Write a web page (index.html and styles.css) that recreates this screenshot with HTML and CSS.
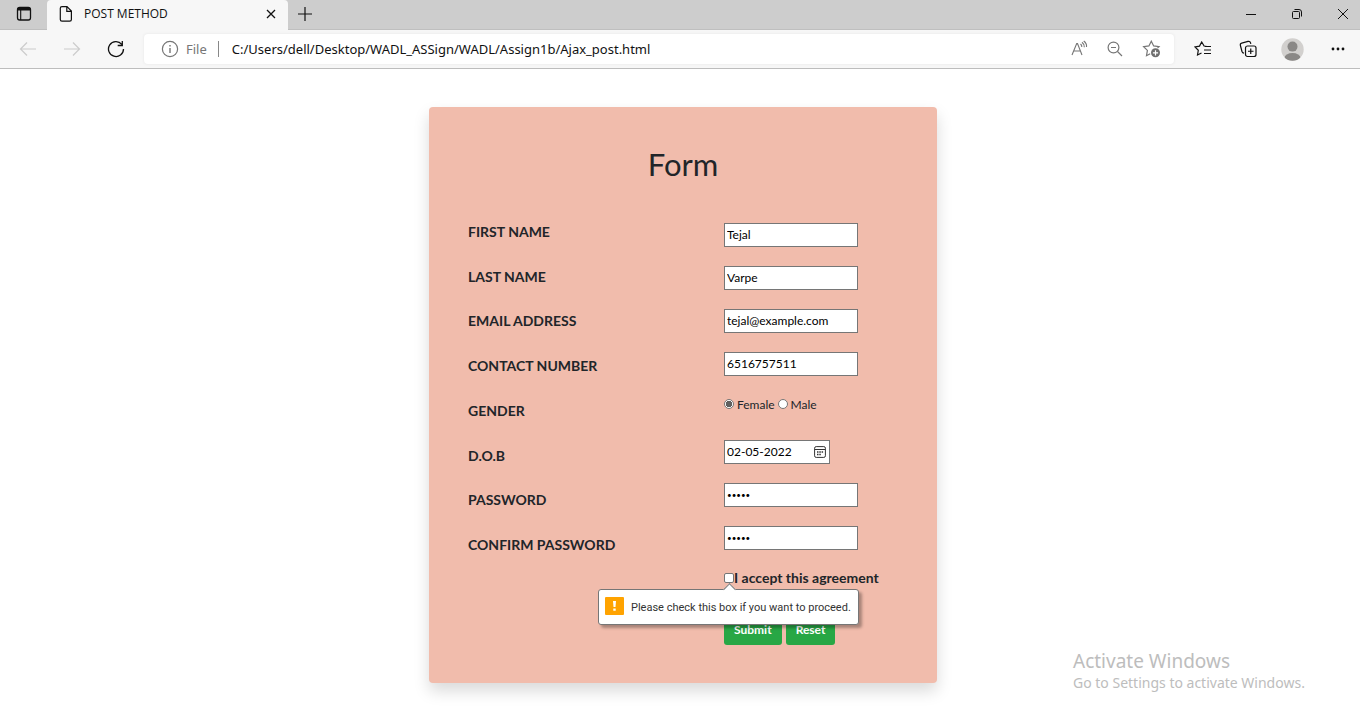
FILE: index.html
```html
<!DOCTYPE html>
<html lang="en">
<head>
<meta charset="utf-8">
<meta name="viewport" content="width=device-width, initial-scale=1">
<title>POST METHOD</title>
<link rel="stylesheet" href="styles.css">
</head>
<body>
<header class="browser">
  <div class="tabstrip">
    <button class="tab-actions" aria-label="Tab actions">
      <svg width="16" height="16" viewBox="0 0 16 16" fill="none" stroke="#111"><rect x="1.5" y="1.5" width="13" height="12.5" rx="2.2" stroke-width="1.3"/><path d="M2 3.2h12" stroke-width="2.6"/><path d="M4.700 4v10" stroke-width="1.1"/></svg>
    </button>
    <div class="tab">
      <svg width="14" height="18" viewBox="0 0 14 18" fill="none" stroke="#111" stroke-width="1.2"><path d="M3 1.6h5l4.400 4.400v8.500a1.700 1.700 0 0 1-1.700 1.700H3a1.700 1.700 0 0 1-1.700-1.700V3.300A1.700 1.700 0 0 1 3 1.600zM7.800 1.800v4.500h4.500"/></svg>
      <span class="tab-title">POST METHOD</span>
      <button class="tab-close" aria-label="Close tab"><svg width="10" height="10" viewBox="0 0 10 10" stroke="#111" stroke-width="1.3"><path d="M1 1l8 8M9 1L1 9"/></svg></button>
    </div>
    <button class="tab-new" aria-label="New tab"><svg width="16" height="16" viewBox="0 0 16 16" stroke="#111" stroke-width="1.200"><path d="M8 1v14M1 8h14"/></svg></button>
    <div class="window-controls">
      <button aria-label="Minimize"><svg width="12" height="12" viewBox="0 0 12 12" stroke="#111"><path d="M1 6.500h10"/></svg></button>
      <button aria-label="Restore"><svg width="12" height="12" viewBox="0 0 12 12" fill="none" stroke="#111"><rect x="1.500" y="3.500" width="7" height="7" rx="1"/><path d="M3.500 1.500H8a2.500 2.500 0 0 1 2.500 2.500v4.500"/></svg></button>
      <button aria-label="Close"><svg width="12" height="12" viewBox="0 0 12 12" stroke="#111"><path d="M1 1l10 10M11 1L1 11"/></svg></button>
    </div>
  </div>
  <div class="toolbar">
    <nav class="history" aria-label="History">
      <button aria-label="Back"><svg width="18" height="16" viewBox="0 0 18 16" fill="none" stroke="#ccc" stroke-width="1.200"><path d="M17 8H1.500M8 1.500L1.500 8 8 14.500"/></svg></button>
      <button aria-label="Forward"><svg width="18" height="16" viewBox="0 0 18 16" fill="none" stroke="#ccc" stroke-width="1.200"><path d="M1 8h15.500M10 1.500L16.500 8 10 14.500"/></svg></button>
      <button aria-label="Refresh"><svg width="18" height="18" viewBox="0 0 18 18" fill="none" stroke="#111" stroke-width="1.300"><path d="M16.500 9A7.500 7.500 0 1 1 14.800 4.300M15.300 1v4.500h-4.600"/></svg></button>
    </nav>
    <div class="address">
      <svg width="18" height="18" viewBox="0 0 18 18" fill="none" stroke="#767676" stroke-width="1.200"><circle cx="9" cy="9" r="7.600"/><path d="M9 8v5M9 5v1.500" stroke-width="1.400"/></svg>
      <label class="scheme" for="url">File</label>
      <input class="url" id="url" type="text" value="C:/Users/dell/Desktop/WADL_ASSign/WADL/Assign1b/Ajax_post.html">
      <div class="address-tools">
        <button aria-label="Read aloud"><svg width="18" height="18" viewBox="0 0 18 18" fill="none" stroke="#767676" stroke-width="1.100"><path d="M2 15L6.700 3.500h.8L12 15M3.700 11h6.700M10.500 4q1.500 1.300 1.300 3M12 2.300q2.600 2 2.300 5M13.700 1q3.300 2.300 2.800 6"/></svg></button>
        <button aria-label="Zoom out"><svg width="16" height="16" viewBox="0 0 16 16" fill="none" stroke="#767676" stroke-width="1.200"><circle cx="6.500" cy="6.500" r="5.400"/><path d="M10.500 10.500l4.500 4.500M4 6.500h5"/></svg></button>
        <button aria-label="Add to favorites"><svg width="19" height="18" viewBox="0 0 19 18" fill="none" stroke="#767676" stroke-width="1.200"><path d="M15.500 8L17 6.700l-5.300-.8L9.300 1.200 6.900 5.900l-5.300.8 3.800 3.700-.9 5.300 3.700-2"/><circle cx="13.500" cy="12.800" r="4.500" fill="#6e6e6e" stroke="none"/><path d="M13.500 10.200v5.200M10.900 12.800h5.200" stroke="#fff"/></svg></button>
      </div>
    </div>
    <div class="actions">
      <button aria-label="Favorites"><svg width="18" height="16" viewBox="0 0 18 16" fill="none" stroke="#111" stroke-width="1.200"><path d="M13 5.500l-2.900-.5L7.700 1 5.500 5.100l-4.500.8 3.300 3.400-.8 4.700L7.500 12M11 5.500h6M10 9h7M10 12.500h7"/></svg></button>
      <button aria-label="Collections"><svg width="18" height="18" viewBox="0 0 18 18" fill="none" stroke="#111" stroke-width="1.200"><rect x="6.500" y="6" width="10.500" height="10.500" rx="2"/><path d="M11.750 8.500V14M9 11.250h5.500M5 13.200C3.800 13 3.300 12.400 3 11.500L1.400 5.500C1.100 4.300 1.600 3.400 2.700 3.100L9 1.400c1.200-.3 2.200.3 2.500 1.300l.3 1.200"/></svg></button>
      <button aria-label="Profile"><svg width="23" height="23" viewBox="0 0 23 23"><defs><clipPath id="avatar"><circle cx="11.500" cy="11.500" r="11.200"/></clipPath></defs><g clip-path="url(#avatar)"><rect width="23" height="23" fill="#d2d0ce"/><circle cx="11.500" cy="8.600" r="5" fill="#8a8886"/><ellipse cx="11.500" cy="20" rx="8" ry="5" fill="#8a8886"/></g></svg></button>
      <button aria-label="Settings and more"><svg width="14" height="4" viewBox="0 0 14 4" fill="#111"><circle cx="2" cy="2" r="1.400"/><circle cx="7" cy="2" r="1.400"/><circle cx="12" cy="2" r="1.400"/></svg></button>
    </div>
  </div>
</header>
<main class="page">
  <form class="card">
    <h1 class="card-title">Form</h1>
    <div class="columns">
      <div class="labels">
        <label for="first">FIRST NAME</label>
        <label for="last">LAST NAME</label>
        <label for="email">EMAIL ADDRESS</label>
        <label for="phone">CONTACT NUMBER</label>
        <span id="gender-label">GENDER</span>
        <label for="dob">D.O.B</label>
        <label for="password">PASSWORD</label>
        <label for="confirm">CONFIRM PASSWORD</label>
      </div>
      <div class="fields">
        <input class="field" id="first" type="text" value="Tejal">
        <input class="field" id="last" type="text" value="Varpe">
        <input class="field" id="email" type="email" value="tejal@example.com">
        <input class="field" id="phone" type="tel" value="6516757511">
        <div class="genders" role="radiogroup" aria-labelledby="gender-label">
          <input class="radio" type="radio" name="gender" id="female" checked><label for="female">Female</label>
          <input class="radio" type="radio" name="gender" id="male"><label for="male">Male</label>
        </div>
        <div class="date">
          <input class="date-text" id="dob" type="text" value="02-05-2022">
          <button class="date-open" type="button" aria-label="Open calendar"><svg width="12" height="12" viewBox="0 0 12 12" fill="none" stroke="#333"><rect x=".6" y=".6" width="10.800" height="10.800" rx="1.600"/><path d="M1 3.500h10"/><path d="M3 6h6.500M3 8.500h4" stroke-dasharray="1.500 .8" stroke-width="1.300"/></svg></button>
        </div>
        <input class="field secret" id="password" type="password" value="tejal">
        <input class="field secret" id="confirm" type="password" value="tejal">
        <div class="agreement">
          <input class="check" type="checkbox" id="agree" aria-describedby="hint"><label for="agree">I accept this agreement</label>
          <div class="hint" id="hint" role="alert">
            <svg width="19" height="18" viewBox="0 0 19 18"><rect width="19" height="18" rx="1" fill="#ffa300"/><path d="M8 4h3l-.5 6h-2zM8.300 11.500h2.400v2.300H8.300z" fill="#fff"/></svg>
            <span class="hint-text">Please check this box if you want to proceed.</span>
          </div>
        </div>
        <div class="buttons">
          <button class="btn" type="submit">Submit</button>
          <button class="btn" type="reset">Reset</button>
        </div>
      </div>
    </div>
  </form>
  <aside class="watermark">
    <p class="watermark-title">Activate Windows</p>
    <p class="watermark-text">Go to Settings to activate Windows.</p>
  </aside>
</main>
</body>
</html>
```
FILE: styles.css
```css
* { box-sizing: border-box; }
body { margin: 0; min-height: 100vh; display: flex; flex-direction: column; background: #fff; color: #212529; font: 14px/18px Lato, sans-serif; }
button { margin: 0; padding: 0; border: 0; background: none; font: inherit; color: inherit; }
svg { display: block; flex: none; }

.browser { font: 13px/18px "Noto Sans", sans-serif; color: #111; background: #f7f7f7; border-bottom: 1px solid #bdbdbd; }
.browser button { display: grid; place-items: center; }
.tabstrip { display: flex; height: 30px; background: #cdcdcd; box-shadow: inset 0 -1px #bfbfbf; }
.tab-actions { width: 47px; padding-bottom: 2px; }
.tab { width: 241px; display: flex; align-items: center; padding: 0 12px 2px 12px; background: #f7f7f7; border-radius: 4px 4px 0 0; }
.tab-title { flex: 1; margin-left: 11px; font: 12px/18px "Open Sans", sans-serif; }
.tab-new { width: 34px; padding-bottom: 2px; }
.window-controls { display: flex; margin-left: auto; }
.window-controls button { width: 46px; padding-bottom: 2px; }
.window-controls button:last-child { width: 40px; padding-left: 6px; }

.toolbar { display: flex; align-items: center; height: 38px; }
.history { display: flex; padding-left: 6px; }
.history button { width: 44px; }
.address { flex: 1; display: flex; align-items: center; height: 30px; margin-left: 6px; padding: 0 13px 0 17px; background: #fff; border-radius: 4px; box-shadow: 0 0 3px #e4e4e4; }
.scheme { margin-left: 7px; padding-right: 11px; border-right: 1px solid #888; color: #767676; line-height: 16px; }
.url { flex: 1; min-width: 0; padding: 0 13px; border: 0; outline: 0; background: none; font: inherit; color: #111; }
.address-tools { display: flex; gap: 19px; }
.actions { display: flex; margin-left: 6px; }
.actions button { width: 45px; }

.page { flex: 1; position: relative; padding: 38px 16px 32px 22px; }
.card { max-width: 508px; margin: 0 auto; padding: 38px; background: #f1bcac; border-radius: 4px; box-shadow: 0 8px 16px rgba(0, 0, 0, .15); }
.card-title { margin: 0 0 40px; font-size: 31px; line-height: 38px; font-weight: 400; text-align: center; }
.columns { display: grid; grid-template-columns: 256px 1fr; }
.labels { display: flex; flex-direction: column; justify-content: space-between; padding: 0 0 91px 1px; font-weight: 700; }
.fields { display: flex; flex-direction: column; align-items: flex-start; gap: 19px; padding-left: 1px; }
.field, .date { height: 24px; border: 1px solid #767676; background: #fff; }
.field { width: 134px; padding: 0 2px 1px; font: 12px/20px Lato, sans-serif; color: #000; border-radius: 0; }
.secret { font-size: 8px; }
.genders { display: flex; height: 26px; font-size: 12px; line-height: 20px; }
.genders label { margin: 0 3px; }
.radio, .check { width: 10px; height: 10px; flex: none; margin: 0; appearance: none; border: 1px solid #767676; background: #fff; }
.radio { margin-top: 4px; border-radius: 50%; }
.radio:checked { background: radial-gradient(circle, #606060 0 3px, #fff 3px); }
.check { border-radius: 2px; }
.date { display: flex; align-items: center; width: 106px; padding: 0 3px 0 2px; }
.date-text { flex: 1; min-width: 0; padding: 0; border: 0; outline: 0; font: 12px/20px Lato, sans-serif; color: #000; }
.agreement { position: relative; display: flex; align-items: center; height: 18px; font-weight: 700; }
.buttons { display: flex; gap: 4px; margin-top: 9px; }
.btn { height: 30px; padding: 0 10px; border-radius: 3px; background: #28a745; color: #fff; font-size: 12px; font-weight: 700; }

.hint { position: absolute; top: 20px; left: -126px; display: flex; align-items: center; gap: 7px; height: 36px; padding: 0 7px 2px 6px; background: #fff; border: 1px solid #767676; border-radius: 3px; box-shadow: 3px 3px 3px rgba(0, 0, 0, .3); font: 11px/18px Roboto, sans-serif; color: #333; white-space: nowrap; }
.hint::before { content: ""; position: absolute; top: -5px; left: 126px; width: 8px; height: 8px; background: #fff; border: 1px solid #767676; border-width: 1px 0 0 1px; transform: rotate(45deg); }
.hint-text { padding-top: 3px; }

.watermark { position: absolute; right: 51px; bottom: 23px; width: 236px; color: #bdbdbd; font-family: "Noto Sans", sans-serif; }
.watermark p { margin: 0; }
.watermark-title { font-size: 19px; line-height: 24px; }
.watermark-text { font-size: 14px; line-height: 20px; }
```
